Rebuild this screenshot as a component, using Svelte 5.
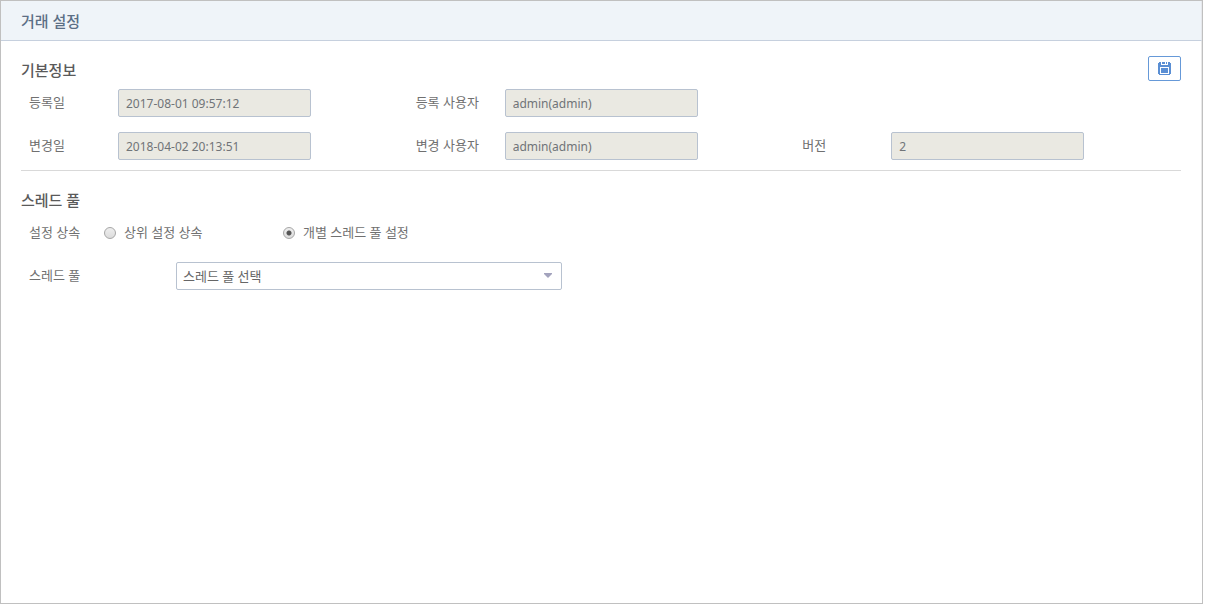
<script lang="ts">
  let info = $state([
    { id: 'created', label: '등록일', value: '2017-08-01 09:57:12' },
    { id: 'creator', label: '등록 사용자', value: 'admin(admin)', last: true },
    { id: 'changed', label: '변경일', value: '2018-04-02 20:13:51' },
    { id: 'changer', label: '변경 사용자', value: 'admin(admin)' },
    { id: 'version', label: '버전', value: '2' }
  ]);

  let inherit = $state('own');
  let pool = $state('');
</script>

<main class="window">
  <header class="title-bar">
    <h1>거래 설정</h1>
  </header>

  <div class="content">
    <section class="basic">
      <div class="section-head">
        <h2>기본정보</h2>
        <button class="save" type="button" aria-label="저장">
          <svg width="13" height="13" viewBox="0 0 13 13" shape-rendering="crispEdges">
            <path
              fill="#5b8fd4"
              fill-rule="evenodd"
              d="M1 0H3V3H10V0H12V1H13V12H12V13H1V12H0V1H1ZM2 5V12H11V5Z"
            />
            <path fill="#5b8fd4" d="M4 0H7V2H4ZM8 0H9V2H8ZM3 6H10V11H3Z" />
          </svg>
        </button>
      </div>
      <div class="info-grid">
        {#each info as item}
          <div class="field" class:last={item.last}>
            <label for={item.id}>{item.label}</label>
            <input id={item.id} type="text" value={item.value} readonly />
          </div>
        {/each}
      </div>
    </section>

    <section>
      <div class="section-head">
        <h2>스레드 풀</h2>
      </div>
      <div class="row" role="radiogroup" aria-labelledby="inherit-label">
        <span class="row-label" id="inherit-label">설정 상속</span>
        <label class="radio">
          <input type="radio" name="inherit" value="parent" bind:group={inherit} />
          <span>상위 설정 상속</span>
        </label>
        <label class="radio">
          <input type="radio" name="inherit" value="own" bind:group={inherit} />
          <span>개별 스레드 풀 설정</span>
        </label>
      </div>
      <div class="row">
        <label class="row-label wide" for="pool">스레드 풀</label>
        <div class="select">
          <select id="pool" bind:value={pool}>
            <option value="">스레드 풀 선택</option>
          </select>
          <svg width="8" height="5" viewBox="0 0 8 5">
            <path fill="#a3a3bd" d="M0 0H8V1L4 5L0 1Z" />
          </svg>
        </div>
      </div>
    </section>
  </div>
</main>

<style>
  :global(body) {
    background: #fff;
  }

  .window {
    box-sizing: border-box;
    min-height: calc(100vh - 4px);
    margin: 0 4px 4px 0;
    border: 1px solid #c0c0c0;
    font-family: 'Noto Sans', 'Noto Sans CJK KR', sans-serif;
    font-size: 13px;
    color: #707070;
  }

  .title-bar {
    height: 39px;
    padding: 0 20px;
    background: #eff4f9;
    border-right: 1px solid #e6e8ec;
    border-bottom: 1px solid #c6d0de;
  }

  h1 {
    margin: 0;
    font-size: 15px;
    font-weight: 500;
    line-height: 41px;
    color: #5c6f86;
  }

  .content {
    box-sizing: border-box;
    min-height: 359px;
    padding: 0 20px;
    border-right: 1px solid #e8e8e8;
  }

  section {
    padding-top: 15px;
  }

  .basic {
    padding-bottom: 10px;
    border-bottom: 1px solid #d9d9d9;
  }

  .section-head {
    display: flex;
    justify-content: space-between;
    height: 25px;
    margin-bottom: 8px;
  }

  h2 {
    margin: 0;
    font-size: 15px;
    font-weight: 500;
    line-height: 28px;
    color: #5a5a5a;
  }

  .save {
    display: flex;
    align-items: center;
    justify-content: center;
    width: 33px;
    padding: 0;
    background: #fff;
    border: 1px solid #6699d8;
    border-radius: 2px;
    cursor: pointer;
  }

  .info-grid {
    display: grid;
    grid-template-columns: repeat(3, 1fr);
    row-gap: 15px;
  }

  .field {
    display: flex;
    align-items: center;
    padding-left: 8px;
  }

  /* the first line only has two fields */
  .last {
    grid-column: 2 / 4;
    width: 50%;
    box-sizing: border-box;
  }

  .field label,
  .row-label,
  .radio span {
    line-height: 18px;
    padding-bottom: 2px;
  }

  .field label {
    width: 89px;
  }

  .field input {
    box-sizing: border-box;
    width: 51%;
    height: 28px;
    padding: 0 7px;
    background: #eae9e2;
    border: 1px solid #b8c2d0;
    border-radius: 2px;
    font-family: inherit;
    font-size: 12px;
    color: #707478;
  }

  .row {
    display: flex;
    align-items: center;
    height: 28px;
    padding-left: 8px;
  }

  .row + .row {
    margin-top: 15px;
  }

  .row-label {
    width: 75px;
  }

  .wide {
    width: 147px;
  }

  .radio {
    display: flex;
    align-items: center;
    gap: 8px;
    width: 179px;
  }

  .radio input {
    appearance: none;
    box-sizing: border-box;
    width: 12px;
    height: 12px;
    margin: 0;
    border: 1px solid #a6a6a6;
    border-radius: 50%;
    background: linear-gradient(#eee, #dcdcdc);
  }

  .radio input:checked {
    background: radial-gradient(circle, #555 0 2px, transparent 3px), linear-gradient(#eee, #dcdcdc);
  }

  .select {
    position: relative;
    width: 33.5%;
  }

  select {
    appearance: none;
    display: block;
    box-sizing: border-box;
    width: 100%;
    height: 28px;
    padding: 0 24px 0 6px;
    background: #fff;
    border: 1px solid #b8c2d0;
    border-radius: 2px;
    font-family: inherit;
    font-size: 13px;
    color: #666;
  }

  .select svg {
    position: absolute;
    top: 11px;
    right: 10px;
    pointer-events: none;
  }
</style>
